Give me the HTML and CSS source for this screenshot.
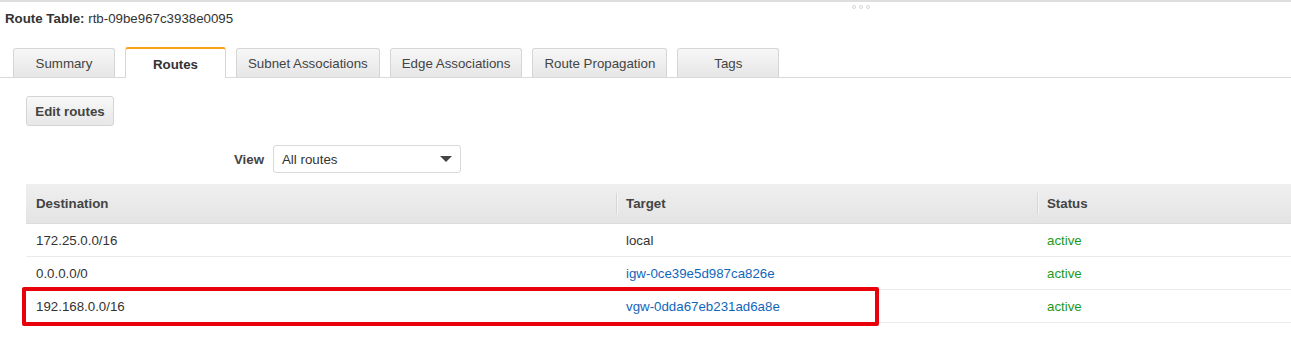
FILE: index.html
```html
<!DOCTYPE html>
<html>
<head>
<meta charset="utf-8">
<link rel="stylesheet" href="styles.css">
</head>
<body>
<div class="page">
  <div class="topbar"><span class="grip"><i></i><i></i><i></i></span></div>
  <div class="title"><b>Route Table:</b> rtb-09be967c3938e0095</div>
  <div class="tabs">
    <div class="tab">Summary</div>
    <div class="tab active">Routes</div>
    <div class="tab">Subnet Associations</div>
    <div class="tab">Edge Associations</div>
    <div class="tab">Route Propagation</div>
    <div class="tab">Tags</div>
  </div>
  <div class="content">
    <button class="btn">Edit routes</button>
    <div class="view-row">
      <label class="view-label">View</label>
      <div class="select"><span>All routes</span><span class="caret"></span></div>
    </div>
    <div class="table-wrap">
      <table class="routes">
        <thead>
          <tr>
            <th class="c-dest">Destination</th>
            <th class="c-target"><span class="sep"></span>Target</th>
            <th class="c-status"><span class="sep"></span>Status</th>
          </tr>
        </thead>
        <tbody>
          <tr><td>172.25.0.0/16</td><td>local</td><td class="ok">active</td></tr>
          <tr><td>0.0.0.0/0</td><td><a class="link">igw-0ce39e5d987ca826e</a></td><td class="ok">active</td></tr>
          <tr><td>192.168.0.0/16</td><td><a class="link">vgw-0dda67eb231ad6a8e</a></td><td class="ok">active</td></tr>
        </tbody>
      </table>
      <div class="highlight"></div>
    </div>
  </div>
</div>
</body>
</html>
```

FILE: styles.css
```css
html, body {
  margin: 0;
  padding: 0;
  background: #fff;
}
body {
  font-family: "Liberation Sans", Arial, Helvetica, sans-serif;
  font-size: 13.3px;
  color: #333;
  width: 1291px;
  height: 337px;
  overflow: hidden;
}
.page {
  position: relative;
}
.topbar {
  height: 8px;
  border-top: 2px solid #dedede;
  position: relative;
}
.grip {
  position: absolute;
  left: 852px;
  top: 3px;
  display: flex;
  gap: 3px;
}
.grip i {
  display: block;
  width: 4px;
  height: 4px;
  border-radius: 50%;
  border: 1px solid #d8d8d8;
  box-sizing: border-box;
}
.title {
  padding-left: 5px;
  line-height: 18px;
  height: 18px;
  color: #333;
}
.title b {
  font-weight: bold;
}
.tabs {
  margin-top: 20px;
  display: flex;
  align-items: flex-end;
  gap: 10px;
  padding-left: 13px;
  height: 29px;
  border-bottom: 1px solid #dadada;
}
.tab {
  box-sizing: border-box;
  height: 29px;
  min-width: 102px;
  padding: 0 11px;
  border: 1px solid #d6d6d6;
  border-bottom: none;
  border-radius: 3px 3px 0 0;
  background: linear-gradient(#f7f7f7, #e6e6e6);
  color: #444;
  line-height: 29px;
  text-align: center;
  white-space: nowrap;
}
.tab.active {
  height: 31px;
  min-width: 101px;
  margin-bottom: -1px;
  border-top: 2px solid #f7a21b;
  background: #fff;
  font-weight: bold;
  color: #333;
  line-height: 31px;
}
.content {
  padding-left: 26px;
}
.btn {
  display: block;
  margin-top: 18px;
  box-sizing: border-box;
  width: 88px;
  height: 30px;
  padding: 0;
  border: 1px solid #d4d4d4;
  border-radius: 3px;
  background: linear-gradient(#f8f8f8, #e7e7e7);
  font-family: "Liberation Sans", Arial, sans-serif;
  font-size: 13.3px;
  font-weight: bold;
  color: #444;
}
.view-row {
  margin-top: 19px;
  display: flex;
  align-items: center;
  gap: 9px;
  height: 28px;
}
.view-label {
  width: 238px;
  text-align: right;
  font-weight: bold;
  color: #444;
}
.select {
  box-sizing: border-box;
  width: 188px;
  height: 28px;
  border: 1px solid #d9d9d9;
  border-radius: 3px;
  display: flex;
  align-items: center;
  justify-content: space-between;
  padding: 0 8px 0 8px;
  color: #333;
}
.caret {
  width: 0;
  height: 0;
  border-left: 6px solid transparent;
  border-right: 6px solid transparent;
  border-top: 6px solid #444;
}
.table-wrap {
  position: relative;
  margin-top: 11px;
  width: 1265px;
}
.routes {
  width: 1265px;
  border-collapse: collapse;
  table-layout: fixed;
}
.routes th {
  height: 39px;
  padding: 0 0 0 10px;
  text-align: left;
  font-weight: bold;
  color: #444;
  background: linear-gradient(#efefef, #e4e4e4);
  border-bottom: 1px solid #dcdcdc;
  position: relative;
}
.c-dest { width: 580px; }
.c-target { width: 411px; }
.sep {
  position: absolute;
  left: 0;
  top: 9px;
  height: 21px;
  border-left: 1px solid #d6d6d6;
  border-right: 1px solid #f6f6f6;
}
.routes td {
  height: 32px;
  padding: 0 0 0 10px;
  border-bottom: 1px solid #eaeaea;
  color: #333;
  white-space: nowrap;
}
.routes td .link {
  color: #1166bb;
  text-decoration: none;
}
.routes td.ok {
  color: #1d9a1d;
}
.highlight {
  position: absolute;
  left: -4px;
  top: 103px;
  width: 857px;
  height: 39px;
  box-sizing: border-box;
  border: 4px solid #e8000a;
  border-radius: 2px;
}
```
